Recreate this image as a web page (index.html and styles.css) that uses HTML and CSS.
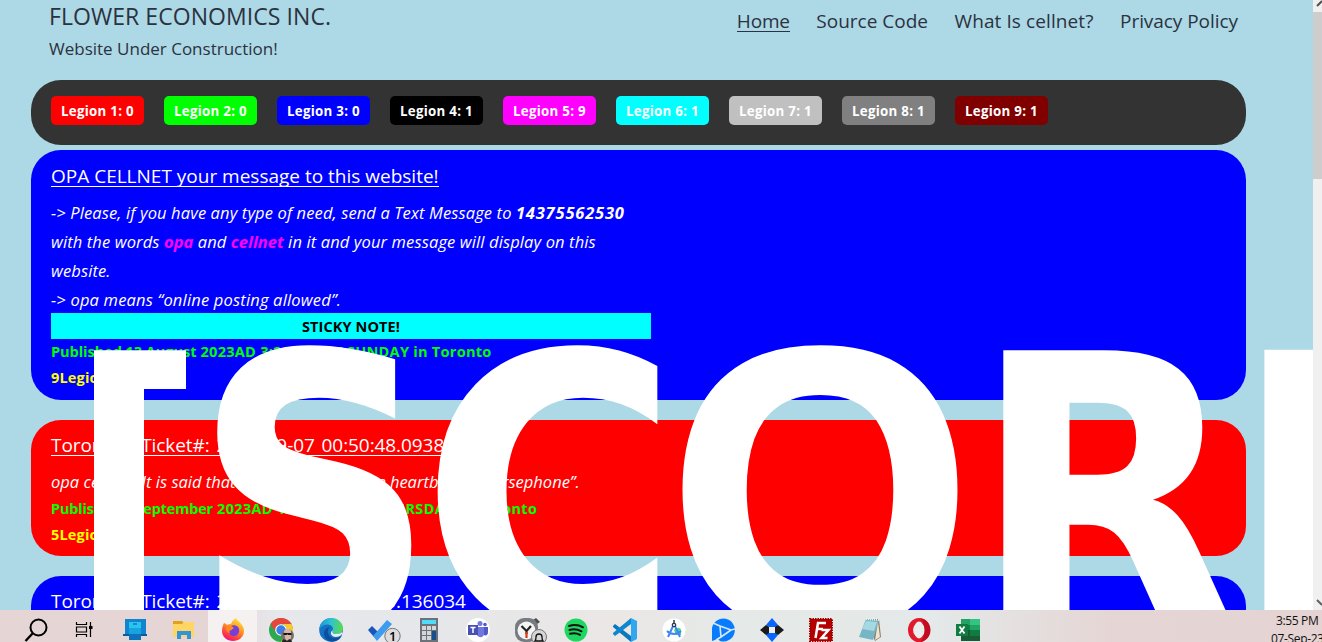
FILE: index.html
```html
<!DOCTYPE html>
<html lang="en">
<head>
<meta charset="utf-8">
<title>Flower Economics Inc.</title>
<link rel="stylesheet" href="styles.css">
</head>
<body>
<div class="viewport">
  <div class="page">
    <header class="header">
      <div class="brand">
        <h1 class="brand-name">FLOWER ECONOMICS INC.</h1>
        <p class="brand-tag">Website Under Construction!</p>
      </div>
      <nav class="nav">
        <a class="nav-link home">Home</a>
        <a class="nav-link">Source Code</a>
        <a class="nav-link what">What Is cellnet?</a>
        <a class="nav-link policy">Privacy Policy</a>
      </nav>
    </header>
    <div class="legions">
      <span class="badge red">Legion 1: 0</span>
      <span class="badge lime">Legion 2: 0</span>
      <span class="badge blue">Legion 3: 0</span>
      <span class="badge black">Legion 4: 1</span>
      <span class="badge magenta">Legion 5: 9</span>
      <span class="badge cyan">Legion 6: 1</span>
      <span class="badge silver">Legion 7: 1</span>
      <span class="badge gray">Legion 8: 1</span>
      <span class="badge maroon">Legion 9: 1</span>
    </div>
    <article class="card blue first">
      <h2 class="card-title">OPA CELLNET your message to this website!</h2>
      <p class="card-text">-&gt; Please, if you have any type of need, send a Text Message to <b class="phone">14375562530</b><br>with the words <b class="key">opa</b> and <b class="key">cellnet</b> in it and your message will display on this<br>website.<br><span class="means">-&gt; opa means “online posting allowed”.</span></p>
      <div class="sticky">STICKY NOTE!</div>
      <p class="published"><span class="day">Published 13 August</span> 2023AD 3:20PM EST SUNDAY in Toronto</p>
      <p class="legion">9Legion</p>
    </article>
    <article class="card red">
      <h2 class="card-title ticket">Toronto - Ticket#: 2023-09-07 00:50:48.09385</h2>
      <p class="card-text quote"><span class="lead">opa cellnet</span> “It is said that roses grow from the heartbeat of Persephone”.</p>
      <p class="published wide"><span class="day tight">Published 7 September</span> 2023AD 12:50AM EST THURSDAY in Toronto</p>
      <p class="legion">5Legion</p>
    </article>
    <article class="card blue">
      <h2 class="card-title ticket">Toronto - Ticket#: 2023-09-05 23:10:10.136034</h2>
    </article>
    <svg class="marquee" width="1219" height="610" viewBox="94 0 1219 610">
      <clipPath id="stem"><path d="M94 340h92v49H144v221H94z"/></clipPath>
      <g clip-path="url(#stem)"><text x="3" y="631" textLength="230" lengthAdjust="spacingAndGlyphs" class="serifed">I</text></g>
      <text x="193" y="631" textLength="243" lengthAdjust="spacingAndGlyphs" class="broad">S</text>
      <text x="420" y="631" textLength="260" lengthAdjust="spacingAndGlyphs" class="broad">C</text>
      <text x="659" y="631" textLength="322" lengthAdjust="spacingAndGlyphs">O</text>
      <text x="971" y="631" textLength="271" lengthAdjust="spacingAndGlyphs" class="broad">R</text>
      <text x="1229" y="631">D</text>
    </svg>
  </div>
  <div class="scrollbar">
    <svg class="arrow" width="9" height="12" viewBox="0 0 9 12"><path d="M4 6 9 1" stroke="#505050" stroke-width="2" fill="none"/></svg>
    <div class="thumb"></div>
    <svg class="arrow down" width="9" height="12" viewBox="0 0 9 12"><path d="M4 2 9 7" stroke="#606060" stroke-width="2" fill="none"/></svg>
  </div>
</div>
<footer class="taskbar">
  <div class="apps">
    <!-- search -->
    <div class="app"><svg width="26" height="24" viewBox="0 0 26 24"><circle cx="14.500" cy="9.500" r="8" fill="none" stroke="#000" stroke-width="2"/><path d="m9 15-7.500 8" stroke="#000" stroke-width="2.400"/></svg></div>
    <!-- task view -->
    <div class="app"><svg width="24" height="24" viewBox="0 0 24 24"><path d="M2.500 4v2.500h10V4M2.500 19v-2.500h10V19M2.500 9h10v5h-10zM16.500 4v15" fill="none" stroke="#000" stroke-width="1.200"/><path d="M15 8h3.500v3H15z"/></svg></div>
    <!-- phone link -->
    <div class="app"><svg width="26" height="24" viewBox="0 0 26 24"><path d="M3 1h21v15H3z" fill="#1283cf"/><path d="M1 16h24v2H1z" fill="#0b5c9e"/><path d="M7 4h12v18H7z" fill="#29c3f2"/><path d="M7 10h12v6H7z" fill="#18a3df"/><path d="M7 16h12v6H7z" fill="#0e72bb"/><path d="M11 6h4" stroke="#075489"/></svg></div>
    <!-- file explorer -->
    <div class="app"><svg width="24" height="24" viewBox="0 0 24 24"><path d="M1 3h9l2 2v4H1z" fill="#e0a21a"/><path d="M1 6h9l2-2h10v15H1z" fill="#ffd563"/><path d="M5 21v-8h14v8h-4v-4H9v4z" fill="#3294dc"/></svg></div>
    <!-- firefox -->
    <div class="app active"><svg width="24" height="24" viewBox="0 0 24 24"><defs><linearGradient id="ff" x1=".8" y1="0" x2=".3" y2="1"><stop offset="0" stop-color="#fff044"/><stop offset=".45" stop-color="#ff9422"/><stop offset=".8" stop-color="#ff3648"/><stop offset="1" stop-color="#e31587"/></linearGradient></defs><path d="M3 5c1 0 2 1 3 2 1-1 3-1 4-1 1-3 3-5 5-6 1 3 8 6 8 13 0 6-5 10-11 10S1 19 1 13c0-4 1-6 2-8z" fill="url(#ff)"/><path d="M8 10c2-3 6-4 9-1 3 4 0 9-4 9-3 0-5-2-5-5l3-1z" fill="#7540d8"/><path d="M6 8c3-1 5 0 7 2l-3 2c-2 0-2 2-1 3-3 0-5-4-3-7z" fill="#ff8a22"/></svg></div>
    <!-- chrome -->
    <div class="app"><svg width="28" height="24" viewBox="0 0 28 24"><circle cx="13" cy="12" r="12" fill="#2da94f"/><path d="M2.600 6A12 12 0 0 1 23.400 6H13a6 6 0 0 0-5 9z" fill="#e8453c"/><path d="M23.400 6A12 12 0 0 1 13 24l5-9a6 6 0 0 0-5-9z" fill="#fdc82f"/><circle cx="13" cy="12" r="5.800" fill="#fff"/><circle cx="13" cy="12" r="4.700" fill="#3b7ded"/><circle cx="19.500" cy="17.500" r="6.500" fill="#77716c"/><path d="M16 13c2-3 6-3 7 0v7c-2 4-5 4-6 0z" fill="#d5b7a7"/><path d="M15.500 15h8v2h-3l-1-.7-1 .7h-3z" fill="#161616"/><path d="M14 24c0-4 3-3 5-1 2-3 5-2 5 1z" fill="#242424"/></svg></div>
    <!-- edge -->
    <div class="app"><svg width="24" height="24" viewBox="0 0 24 24"><defs><linearGradient id="eg" x1="0" x2="1" y1=".2" y2=".3"><stop offset="0" stop-color="#1795dc"/><stop offset=".5" stop-color="#30c3cf"/><stop offset="1" stop-color="#5bd950"/></linearGradient></defs><circle cx="12" cy="12" r="11.800" fill="#1471c4"/><path d="M.5 11C1 4 6 0 12 0c7 0 12 5 12 10 0 5-4 6-7 6-4 0-4-2-3-4 1-6-9-8-13.500-1z" fill="url(#eg)"/><path d="M11 9c-5 4-1 12 6 11 3 0 5-2 6-3-3 8-12 8-16 4-4-5-2-11 4-12z" fill="#0c4f9c"/><path d="M14 12c-1 2-1 4 3 4 3 0 5-1 6-2 1 2-2 5-6 5-5 0-7-5-3-7z" fill="#e8edf0"/></svg></div>
    <!-- to do -->
    <div class="app"><svg class="badged" width="34" height="24" viewBox="0 0 34 24"><path d="m1 12 4-4 6 6-4 5z" fill="#1c55ba"/><path d="m6 18 14-16 5 4-15 17z" fill="#3d9cec"/><circle cx="25.500" cy="18" r="7.700" fill="#dcdcdc" stroke="#777"/><text x="22" y="23" class="count">1</text></svg></div>
    <!-- calculator -->
    <div class="app"><svg width="20" height="24" viewBox="0 0 20 24"><path d="M1 0h18v24H1z" fill="#6d7278"/><path d="M3 2h14v4H3z" fill="#4fdcfb"/><path d="M3 8h4v4H3zm5 0h4v4H8zm5 0h4v4h-4zM3 13h4v4H3zm5 0h4v4H8zM3 18h4v4H3zm5 0h4v4H8z" fill="#d3d7da"/><path d="M13 13h4v9h-4z" fill="#174e8c"/></svg></div>
    <!-- teams -->
    <div class="app"><svg width="24" height="24" viewBox="0 0 24 24"><circle cx="12" cy="12" r="12" fill="#fff"/><circle cx="14" cy="5.500" r="2.500" fill="#7078dd"/><circle cx="19" cy="6.500" r="1.800" fill="#5059c9"/><path d="M11 9h7v7c0 4-6 4-7 1z" fill="#7078dd"/><path d="M18 9h4v5c0 3-2 4-4 3z" fill="#5059c9"/><path d="M2 7h10v10H2z" fill="#4950b4"/><path d="M4.500 9.500h5M7 9.500V15" stroke="#fff" stroke-width="1.500"/></svg></div>
    <!-- clock -->
    <div class="app"><svg class="badged" width="34" height="24" viewBox="0 0 34 24"><path d="m19 2 3-2 4 4-3 2z" fill="#4c4f55"/><rect x="1" width="23" height="24" rx="9" fill="#777c82"/><circle cx="12.500" cy="12.500" r="9" fill="#f4f4f4"/><path d="m7.500 8 5 5 4.500-5M12.500 12v4" stroke="#222" stroke-width="2.200" fill="none"/><path d="M12.500 14v6" stroke="#d63a14" stroke-width="2.200"/><circle cx="25" cy="19" r="7.500" fill="#d6d6d6" stroke="#777"/><path d="M21 23h8c-1-1-1-2-1-4 0-4-6-4-6 0 0 2 0 3-1 4z" fill="none" stroke="#111" stroke-width="1.300"/></svg></div>
    <!-- spotify -->
    <div class="app"><svg width="24" height="24" viewBox="0 0 24 24"><circle cx="12" cy="12" r="11.500" fill="#1ed760"/><path d="M5 8c5-1.500 10-1 14 1.300M5.500 12c4-1.200 8-.8 12 1.300M6 15.700c4-.8 7-.6 10 1.100" fill="none" stroke="#111" stroke-width="2" stroke-linecap="round"/></svg></div>
    <!-- vs code -->
    <div class="app"><svg width="24" height="24" viewBox="0 0 24 24"><path d="M0 8l2-2 16 12v6L0 9z" fill="#0878bf"/><path d="M0 16l2 2L18 6V0L0 15z" fill="#0f86cf"/><path d="m18 0 6 3v18l-6 3z" fill="#30a7ee"/></svg></div>
    <!-- android studio -->
    <div class="app"><svg width="24" height="24" viewBox="0 0 24 24"><circle cx="12" cy="12" r="11.500" fill="#fff"/><path d="M12 12c3-4 8-2 7 1v4h-5z" fill="#3ddc84"/><path d="M12 6 6 19M12 6l6 13M5 13c4 4 10 4 14 0" stroke="#4285f4" stroke-width="2" fill="none"/><circle cx="12" cy="7" r="1.700" fill="#fff" stroke="#263846" stroke-width="1.300"/><path d="M12 2v3" stroke="#263846" stroke-width="1.500"/></svg></div>
    <!-- video chat -->
    <div class="app"><svg width="24" height="24" viewBox="0 0 24 24"><path d="M1 23V10A11.500 11.500 0 1 1 9 23l-2-2z" fill="#087cff"/><path d="M2 5l7 3 11 4 4-1M20 12l-10 7-5 3M9 8l1 11" fill="none" stroke="#dce9f2" stroke-width="1.600"/></svg></div>
    <!-- diamond -->
    <div class="app"><svg width="24" height="24" viewBox="0 0 24 24"><path d="M12 0 6 7l3 2h7v2l2-4zM12 24l6-7-2-2H8v-2l-2 4z" fill="#0965ff"/><path d="m18 7 6 5-6 5-3-2V9zM6 7l-6 5 6 5 3-2V9z" fill="#1b1b1d"/><path d="M9 9h6v6H9z" fill="#edf0f0"/></svg></div>
    <!-- filezilla -->
    <div class="app"><svg width="24" height="24" viewBox="0 0 24 24"><path d="M1 1h22v22H1z" fill="#b40000" stroke="#a00000" stroke-width="2" stroke-dasharray="1.500 1"/><path d="M6.500 20 9 5h8M8 11h6M12.500 12h7l-7 8h6" fill="none" stroke="#fff" stroke-width="2.500"/></svg></div>
    <!-- notepad -->
    <div class="app"><svg width="24" height="24" viewBox="0 0 24 24"><path d="m8 2 13-1 2 18-6 4z" fill="#8b7f68"/><path d="m8 1 13 1-6 20-14-3z" fill="#76b6c7"/><path d="m8 3 11 1-3 9-12-2z" fill="#a5d8e1"/><path d="m8 1 13 1" stroke="#eee" stroke-width="2" stroke-dasharray="1 1"/><path d="m20 4 2 15-5 3z" fill="#eee4cf"/></svg></div>
    <!-- opera -->
    <div class="app"><svg width="24" height="24" viewBox="0 0 24 24"><ellipse cx="12" cy="12" rx="8.500" ry="9.500" fill="none" stroke="#e3192d" stroke-width="5"/><path d="M13 .200c14 1 14 22.600 0 23.600 6-4 6-19.600 0-23.600z" fill="#c30c22"/><ellipse cx="12" cy="12" rx="5" ry="8.500" fill="#eaeeed"/></svg></div>
    <!-- excel -->
    <div class="app"><svg width="24" height="24" viewBox="0 0 24 24"><path d="M5 1h19v22H5z" fill="#21a366"/><path d="M14 1h10v6H14z" fill="#33c481"/><path d="M5 7h9v5H5zM14 12h10v6H14z" fill="#107c41"/><path d="M5 12h9v6h10v5H5z" fill="#185c37"/><path d="M0 6h12v12H0z" fill="#107c41"/><path d="m3.500 8.500 5 7m0-7-5 7" stroke="#fff" stroke-width="1.800"/></svg></div>
  </div>
  <div class="clock"><span class="time">3:55 PM</span><span class="date">07-Sep-23</span></div>
</footer>
</body>
</html>
```
FILE: styles.css
```css
* { box-sizing: border-box; }
body {
  margin: 0;
  width: 1322px;
  height: 642px;
  overflow: hidden;
  background: #add8e6;
  font-family: "Open Sans", "Noto Sans", sans-serif;
  color: #2b3240;
}
h1, h2, p { margin: 0; font-weight: 400; }
.viewport { display: flex; height: 610px; overflow: hidden; }
.page { position: relative; flex: 1; height: 610px; overflow: hidden; padding: 0 67px 0 31px; }

.header { display: flex; justify-content: space-between; height: 80px; padding: 0 8px 0 18px; white-space: nowrap; }
.brand-name { font-size: 23px; line-height: 32px; letter-spacing: .06px; }
.brand-tag { font-size: 17px; line-height: 34px; }
.nav { display: flex; gap: 26.500px; padding-top: 8px; font-size: 19px; line-height: 26px; }
.nav-link { height: 24px; }
.home { border-bottom: 1px solid #2b3240; letter-spacing: -.17px; }
.what { letter-spacing: .1px; }
.policy { letter-spacing: -.05px; }

.legions {
  display: flex;
  gap: 20px;
  height: 65px;
  margin-bottom: 5px;
  padding: 16px 20px;
  border-radius: 30px;
  background: #333;
}
.badge {
  width: 93px;
  height: 29px;
  border-radius: 5px;
  color: #fff;
  font-size: 13.300px;
  font-weight: 700;
  line-height: 31px;
  letter-spacing: .28px;
  text-align: center;
  white-space: nowrap;
}
.red { background: #f00; }
.lime { background: #0f0; }
.blue { background: #00f; }
.black { background: #000; }
.magenta { background: #f0f; }
.cyan { background: #0ff; }
.silver { background: #c0c0c0; }
.gray { background: #808080; }
.maroon { background: #800000; }

.card { height: 136px; margin-bottom: 20px; padding: 14px 20px 0; border-radius: 30px; color: #fff; white-space: nowrap; }
.card-title { display: table; height: 22px; margin-bottom: 12px; padding-top: 1px; border-bottom: 1px solid #fff; font-size: 19px; line-height: 20px; }
.first { height: 250px; padding-top: 15px; }
.first .card-title { margin-bottom: 11px; }
.ticket { word-spacing: 2px; letter-spacing: -.08px; }
.card-text { font-size: 16.500px; font-style: italic; line-height: 29px; letter-spacing: .12px; }
.quote { line-height: 28px; letter-spacing: 0; }
.lead { margin-right: 1px; }
.means { letter-spacing: .18px; }
.phone { letter-spacing: .8px; }
.key { color: #f0f; letter-spacing: 0; }
.sticky { width: 600px; height: 26px; margin-top: -1px; background: #0ff; color: #000; font-size: 14.500px; font-weight: 700; line-height: 27px; text-align: center; letter-spacing: .1px; }
.published, .legion { font-size: 14.500px; font-weight: 700; line-height: 26px; letter-spacing: .18px; }
.published { color: #0f0; letter-spacing: .28px; }
.day { letter-spacing: -.03px; }
.wide { letter-spacing: .33px; }
.tight { letter-spacing: -.2px; }
.legion { color: #ff0; }

.marquee { position: absolute; left: 94px; top: 0; fill: #fff; font: 700 394px "Open Sans", sans-serif; }
.broad { font-family: "DejaVu Sans", sans-serif; font-size: 385px; }
.serifed { font-family: "DejaVu Sans Mono", monospace; font-size: 385px; }

.scrollbar { display: flex; flex-direction: column; width: 9px; background: #f0f0f0; }
.thumb { height: 167px; background: #cdcdcd; }
.down { margin-top: auto; }

.taskbar {
  display: flex;
  justify-content: space-between;
  height: 32px;
  overflow: hidden;
  background: linear-gradient(90deg, #e5d5d4 0, #e5d5d4 210px, #e6e8ec 280px, #e5e7eb 400px, #ebe7e5 620px, #e5e9e7 720px, #e4e9e9 930px, #e5d6d5 1110px, #e4d3d2 1322px);
}
.apps { display: flex; padding-left: 12px; }
.app { display: flex; flex: none; width: 49px; height: 32px; padding-top: 8px; justify-content: center; }
.app svg { flex: none; }
.badged { margin-left: 8px; }
.active { background: #f5f1f1; }
.count { font: 600 13px "Open Sans", sans-serif; }
.clock { display: flex; flex-direction: column; width: 51px; color: #111; font-size: 12px; line-height: 18px; letter-spacing: -.35px; white-space: nowrap; }
.time { padding: 2px 0 0 5px; }
```
